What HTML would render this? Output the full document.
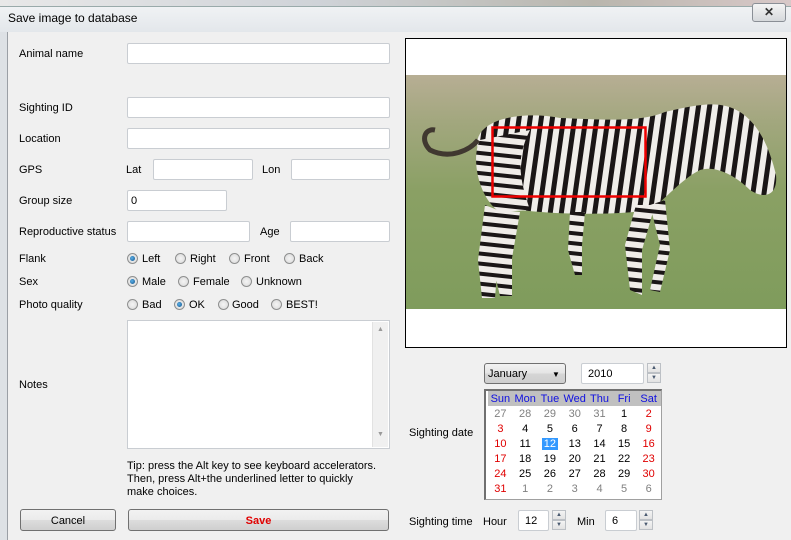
<!DOCTYPE html>
<html><head><meta charset="utf-8"><style>
*{margin:0;padding:0;box-sizing:border-box}
body{width:791px;height:540px;overflow:hidden;position:relative;background:#dfe3e8;font-family:"Liberation Sans",sans-serif;font-size:11px;color:#000}
.a{position:absolute}
.in{position:absolute;background:#fff;border:1px solid #c9cdd2;border-radius:2px;height:21px;padding:4px 0 0 3px}
.lb{position:absolute;left:19px}
.rd{position:absolute;width:11px;height:11px;border-radius:50%;border:1px solid #8e8f8f;background:radial-gradient(circle,#f4f4f4,#d8d8d8)}
.rd.on::after{content:"";position:absolute;left:2px;top:2px;width:5px;height:5px;border-radius:50%;background:radial-gradient(circle at 40% 40%,#5bb0e8,#0d4f87)}
.btn{position:absolute;border:1px solid #707070;border-radius:3px;background:linear-gradient(#f2f2f2,#ebebeb 50%,#dddddd 50%,#cfcfcf);text-align:center;line-height:22px}
.sp{position:absolute;width:14px;height:21px}
.sp div{height:10px;border:1px solid #bcc0c5;background:linear-gradient(#f4f4f4,#e2e2e2);font-size:6px;text-align:center;line-height:8px;color:#4a5a70}
.cal td{width:25px;text-align:center;height:15px;font-size:11px}
.g{color:#808080}.r{color:#e00000}
</style></head><body>
<div class="a" style="left:0;top:0;width:791px;height:8px;background:linear-gradient(90deg,#e8e8e8,#cfd3d8 40%,#b9b6ad 75%,#d8c8c8)"></div>
<div class="a" style="left:0;top:6px;width:791px;height:26px;background:linear-gradient(#f0f2f4,#e3e7eb);border-top:1px solid #9aa"></div>
<div class="a" style="left:8px;top:11px;font-size:12px">Save image to database</div>
<div class="a" style="left:752px;top:3px;width:34px;height:19px;border:1px solid #8a8f96;border-radius:3px;background:linear-gradient(#f4f4f4,#d6d9dc);text-align:center;font-weight:bold;font-size:12px;line-height:17px;color:#333">✕</div>
<div class="a" style="left:0;top:32px;width:8px;height:508px;background:#dde1e5;border-right:1px solid #9a9fa5"></div>
<div class="a" style="left:8px;top:32px;width:783px;height:508px;background:#f0f0f0"></div>

<div class="lb" style="top:48px">Animal name</div><div class="in" style="left:127px;top:43px;width:263px"></div>
<div class="lb" style="top:102px">Sighting ID</div><div class="in" style="left:127px;top:97px;width:263px"></div>
<div class="lb" style="top:133px">Location</div><div class="in" style="left:127px;top:128px;width:263px"></div>
<div class="lb" style="top:164px">GPS</div><div class="a" style="left:126px;top:164px">Lat</div><div class="in" style="left:153px;top:159px;width:100px"></div><div class="a" style="left:262px;top:164px">Lon</div><div class="in" style="left:291px;top:159px;width:99px"></div>
<div class="lb" style="top:195px">Group size</div><div class="in" style="left:127px;top:190px;width:100px">0</div>
<div class="lb" style="top:226px">Reproductive status</div><div class="in" style="left:127px;top:221px;width:123px"></div><div class="a" style="left:260px;top:226px">Age</div><div class="in" style="left:290px;top:221px;width:100px"></div>

<div class="lb" style="top:253px">Flank</div>
<div class="rd on" style="left:127px;top:253px"></div><div class="a" style="left:142px;top:253px">Left</div>
<div class="rd" style="left:175px;top:253px"></div><div class="a" style="left:190px;top:253px">Right</div>
<div class="rd" style="left:229px;top:253px"></div><div class="a" style="left:244px;top:253px">Front</div>
<div class="rd" style="left:284px;top:253px"></div><div class="a" style="left:299px;top:253px">Back</div>
<div class="lb" style="top:276px">Sex</div>
<div class="rd on" style="left:127px;top:276px"></div><div class="a" style="left:142px;top:276px">Male</div>
<div class="rd" style="left:178px;top:276px"></div><div class="a" style="left:193px;top:276px">Female</div>
<div class="rd" style="left:241px;top:276px"></div><div class="a" style="left:256px;top:276px">Unknown</div>
<div class="lb" style="top:299px">Photo quality</div>
<div class="rd" style="left:127px;top:299px"></div><div class="a" style="left:142px;top:299px">Bad</div>
<div class="rd on" style="left:174px;top:299px"></div><div class="a" style="left:189px;top:299px">OK</div>
<div class="rd" style="left:218px;top:299px"></div><div class="a" style="left:232px;top:299px">Good</div>
<div class="rd" style="left:271px;top:299px"></div><div class="a" style="left:286px;top:299px">BEST!</div>

<div class="lb" style="top:379px">Notes</div>
<div class="a" style="left:127px;top:320px;width:263px;height:129px;background:#fff;border:1px solid #c9cdd2"></div>
<div class="a" style="left:372px;top:322px;width:16px;height:125px;background:#f0f0f0;border-left:1px solid #e2e2e2;font-size:7px;color:#999;text-align:center"><div style="margin-top:4px">▲</div><div style="margin-top:98px">▼</div></div>

<div class="a" style="left:127px;top:460px;line-height:13px">Tip: press the Alt key to see keyboard accelerators.<br>Then, press Alt+the underlined letter to quickly<br>make choices.</div>
<div class="btn" style="left:20px;top:509px;width:96px;height:22px">Cancel</div>
<div class="btn" style="left:128px;top:509px;width:261px;height:22px;color:#e00000;font-weight:bold">Save</div>

<div class="a" style="left:405px;top:38px;width:382px;height:310px;background:#fff;border:1px solid #000;overflow:hidden">
<svg width="380" height="308" viewBox="406 39 380 308">
<defs>
<linearGradient id="gr" x1="0" y1="0" x2="0" y2="1"><stop offset="0" stop-color="#b7ae94"/><stop offset="0.2" stop-color="#a2a77e"/><stop offset="0.5" stop-color="#8aa064"/><stop offset="1" stop-color="#7f9c5c"/></linearGradient>
<pattern id="st" width="11" height="40" patternUnits="userSpaceOnUse" patternTransform="rotate(8)"><rect width="11" height="40" fill="#f0eeea"/><rect width="5" height="40" fill="#1a1616"/></pattern>
<pattern id="st2" width="40" height="10" patternUnits="userSpaceOnUse" patternTransform="rotate(6)"><rect width="40" height="10" fill="#efece8"/><rect width="40" height="4" fill="#1a1616"/></pattern>
</defs>
<rect x="406" y="75" width="380" height="234" fill="url(#gr)"/>
<path d="M478 150 C470 120 520 110 560 118 C610 120 640 122 665 112 C700 104 720 100 740 112 C760 125 770 150 776 175 C778 195 765 200 750 190 C735 175 715 165 700 170 C680 180 665 200 650 210 C620 215 560 215 520 210 C500 210 480 195 478 150Z" fill="url(#st)"/>
<path d="M480 140 C470 160 480 200 500 212 L530 210 C520 180 515 160 530 130 Z" fill="url(#st2)"/>
<path d="M485 205 L478 260 L482 298 L495 298 L498 260 L510 215Z M500 210 L492 262 L500 296 L512 296 L512 258 L520 212Z M570 212 L568 250 L575 275 L582 275 L582 245 L585 212Z M636 205 L625 245 L630 290 L642 295 L642 250 L655 205Z M650 205 L660 245 L650 290 L660 292 L670 250 L665 200Z" fill="url(#st2)"/>
<path d="M478 140 C470 150 450 160 430 150 C420 140 425 128 435 130" stroke="#403830" stroke-width="5" fill="none"/>
<rect x="492.5" y="127.5" width="153" height="69" fill="none" stroke="#e00" stroke-width="2.5"/>
</svg></div>

<div class="a" style="left:409px;top:427px">Sighting date</div>
<div class="a" style="left:484px;top:363px;width:82px;height:21px;border:1px solid #707070;border-radius:3px;background:linear-gradient(#f2f2f2,#e4e4e4 50%,#d6d6d6 50%,#cecece);padding:4px 0 0 3px">January<span style="position:absolute;left:67px;top:6px;font-size:8px">▼</span></div>
<div class="in" style="left:581px;top:363px;width:63px;padding-left:6px">2010</div>
<div class="sp" style="left:647px;top:363px"><div>▲</div><div>▼</div></div>
<div class="a cal" style="left:484px;top:389px;width:178px;height:111px;background:#fff;border:1px solid #a0a0a0;border-left:2px solid #707070;border-top:2px solid #707070">
<table style="border-collapse:collapse;margin-left:2px">
<tr style="background:#c0c0c0;color:#1010e0"><td>Sun</td><td>Mon</td><td>Tue</td><td>Wed</td><td>Thu</td><td>Fri</td><td>Sat</td></tr>
<tr><td class="g">27</td><td class="g">28</td><td class="g">29</td><td class="g">30</td><td class="g">31</td><td>1</td><td class="r">2</td></tr>
<tr><td class="r">3</td><td>4</td><td>5</td><td>6</td><td>7</td><td>8</td><td class="r">9</td></tr>
<tr><td class="r">10</td><td>11</td><td><span style="background:#3399ff;color:#fff;padding:0 2px">12</span></td><td>13</td><td>14</td><td>15</td><td class="r">16</td></tr>
<tr><td class="r">17</td><td>18</td><td>19</td><td>20</td><td>21</td><td>22</td><td class="r">23</td></tr>
<tr><td class="r">24</td><td>25</td><td>26</td><td>27</td><td>28</td><td>29</td><td class="r">30</td></tr>
<tr><td class="r">31</td><td class="g">1</td><td class="g">2</td><td class="g">3</td><td class="g">4</td><td class="g">5</td><td class="g">6</td></tr>
</table></div>

<div class="a" style="left:409px;top:516px">Sighting time</div>
<div class="a" style="left:483px;top:516px">Hour</div>
<div class="in" style="left:518px;top:510px;width:31px;padding-left:6px">12</div>
<div class="sp" style="left:552px;top:510px"><div>▲</div><div>▼</div></div>
<div class="a" style="left:577px;top:516px">Min</div>
<div class="in" style="left:605px;top:510px;width:32px;padding-left:6px">6</div>
<div class="sp" style="left:639px;top:510px"><div>▲</div><div>▼</div></div>
</body></html>
